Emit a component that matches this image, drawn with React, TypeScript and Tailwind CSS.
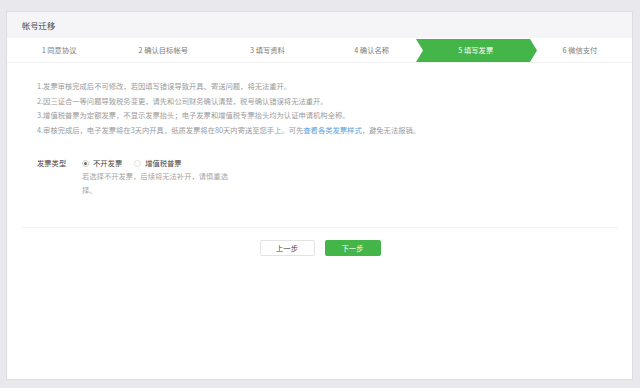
const STEPS = ["1 同意协议", "2 确认目标帐号", "3 填写资料", "4 确认名称", "5 填写发票", "6 微信支付"];
const ACTIVE = 4;

const NOTES = [
  "1.发票审核完成后不可修改，若因填写错误导致开具、寄送问题，将无法重开。",
  "2.因三证合一等问题导致税务变更，请先和公司财务确认清楚，税号确认错误将无法重开。",
  "3.增值税普票为定额发票，不显示发票抬头；电子发票和增值税专票抬头均为认证申请机构全称。",
];

export default function App() {
  return (
    <div
      className="w-[640px] h-[388px] bg-[#e9e9ed] pt-[11px] pl-[6px] overflow-hidden"
      style={{ fontFamily: '"Noto Sans CJK SC", "Noto Sans", sans-serif' }}
    >
      <div className="w-[627px] h-[369px] bg-white border border-[#dcdce2] flex flex-col">
        <div className="h-[26px] bg-[#f5f5f8] flex items-center pl-[15px] text-[8.3px] text-[#444]">帐号迁移</div>

        <div className="h-[25px] flex border-b border-[#f0f0f0]">
          {STEPS.map((s, i) => (
            <div key={s} className="relative flex-1 flex items-center justify-center text-[7.3px] text-[#7a7a7a]">
              {i === ACTIVE && (
                <svg className="absolute left-[-8px] top-[1px] h-[23px] w-[121px]" viewBox="0 0 121 23" preserveAspectRatio="none">
                  <polygon points="0,0 114,0 121,11.5 114,23 0,23 7,11.5" fill="#44b549" />
                </svg>
              )}
              <span className={i === ACTIVE ? "relative text-white" : "relative"}>{s}</span>
            </div>
          ))}
        </div>

        <div className="pl-[30px] pt-[16px] text-[7.3px] leading-[14.5px] text-[#9a9a9a]">
          {NOTES.map((n) => (
            <div key={n}>{n}</div>
          ))}
          <div>
            4.审核完成后，电子发票将在3天内开具，纸质发票将在80天内寄送至您手上。可先
            <span className="text-[#5a9fe0]">查看各类发票样式</span>，避免无法报销。
          </div>
        </div>

        <div className="flex pl-[30px] pt-[19px] text-[7.3px]">
          <div className="w-[45px] leading-[14px] text-[#444]">发票类型</div>
          <div className="flex flex-col">
            <div className="flex items-center h-[14px] text-[#444]">
              <span className="w-[7px] h-[7px] rounded-full border border-[#ccc] flex items-center justify-center mr-[4px]">
                <span className="w-[3px] h-[3px] rounded-full bg-[#666]" />
              </span>
              <span className="mr-[12px]">不开发票</span>
              <span className="w-[7px] h-[7px] rounded-full border border-[#e0e0e0] mr-[4px]" />
              <span>增值税普票</span>
            </div>
            <div className="w-[148px] leading-[13.5px] text-[#a5a5a5]">若选择不开发票，后续将无法补开，请慎重选择。</div>
          </div>
        </div>

        <div className="mx-[14px] mt-[30px] border-t border-[#f3f3f3]" />

        <div className="flex justify-center gap-[10px] mt-[12px] pl-[1px]">
          <button className="w-[55px] h-[16px] bg-white border border-[#e3e3e3] rounded-[2px] text-[7.3px] text-[#444]">上一步</button>
          <button className="w-[56px] h-[16px] bg-[#44b549] rounded-[2px] text-[7.3px] text-white">下一步</button>
        </div>
      </div>
    </div>
  );
}
